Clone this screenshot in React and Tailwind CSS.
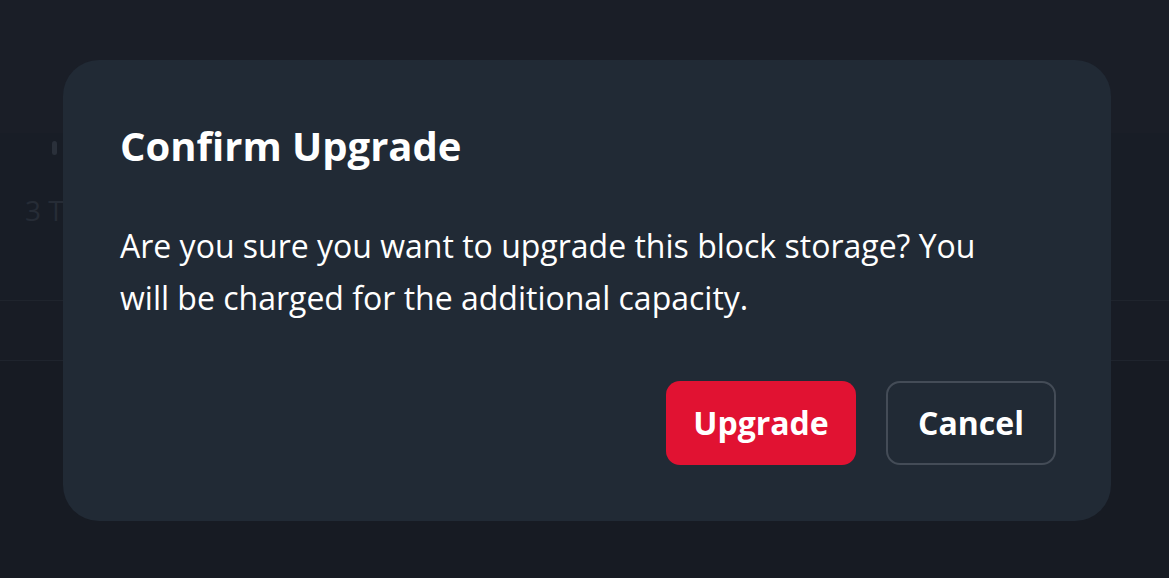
import React from "react";

export default function App() {
  return (
    <div
      className="relative w-[1169px] h-[578px] overflow-hidden bg-[#181c25]"
      style={{ fontFamily: "'Open Sans', 'Noto Sans', sans-serif" }}
    >
      {/* dimmed background page */}
      <div className="absolute inset-0 flex flex-col">
        <div className="h-[133px] bg-[#1a1e27]" />
        <div className="h-[168px] bg-[#181d26] border-b border-[#1f242d] relative">
          <div className="absolute left-[52px] top-[8px] w-[5px] h-[14px] rounded bg-[#2a303a]" />
          <div className="absolute left-[25px] top-[56px] text-[28px] text-[#262c36]">3 TB</div>
        </div>
        <div className="h-[60px] bg-[#181c25] border-b border-[#1f242d]" />
        <div className="flex-1 bg-[#171b23]" />
      </div>

      {/* dialog */}
      <div className="absolute left-[63px] top-[60px] w-[1048px] h-[461px] rounded-[36px] bg-[#212a35] pl-[57px] pr-[55px] pt-[62px] pb-[56px] flex flex-col">
        <h2 className="text-[40px] leading-[48px] font-bold text-white">Confirm Upgrade</h2>
        <p className="mt-[50px] w-[900px] text-[32px] leading-[52px] text-white">
          Are you sure you want to upgrade this block storage? You will be charged for the additional capacity.
        </p>
        <div className="mt-auto flex justify-end gap-[30px]">
          <button className="w-[190px] h-[84px] rounded-[14px] bg-[#e11232] text-white text-[32px] font-bold">
            Upgrade
          </button>
          <button className="w-[170px] h-[84px] rounded-[14px] border-2 border-[#444c57] text-white text-[32px] font-bold">
            Cancel
          </button>
        </div>
      </div>
    </div>
  );
}
